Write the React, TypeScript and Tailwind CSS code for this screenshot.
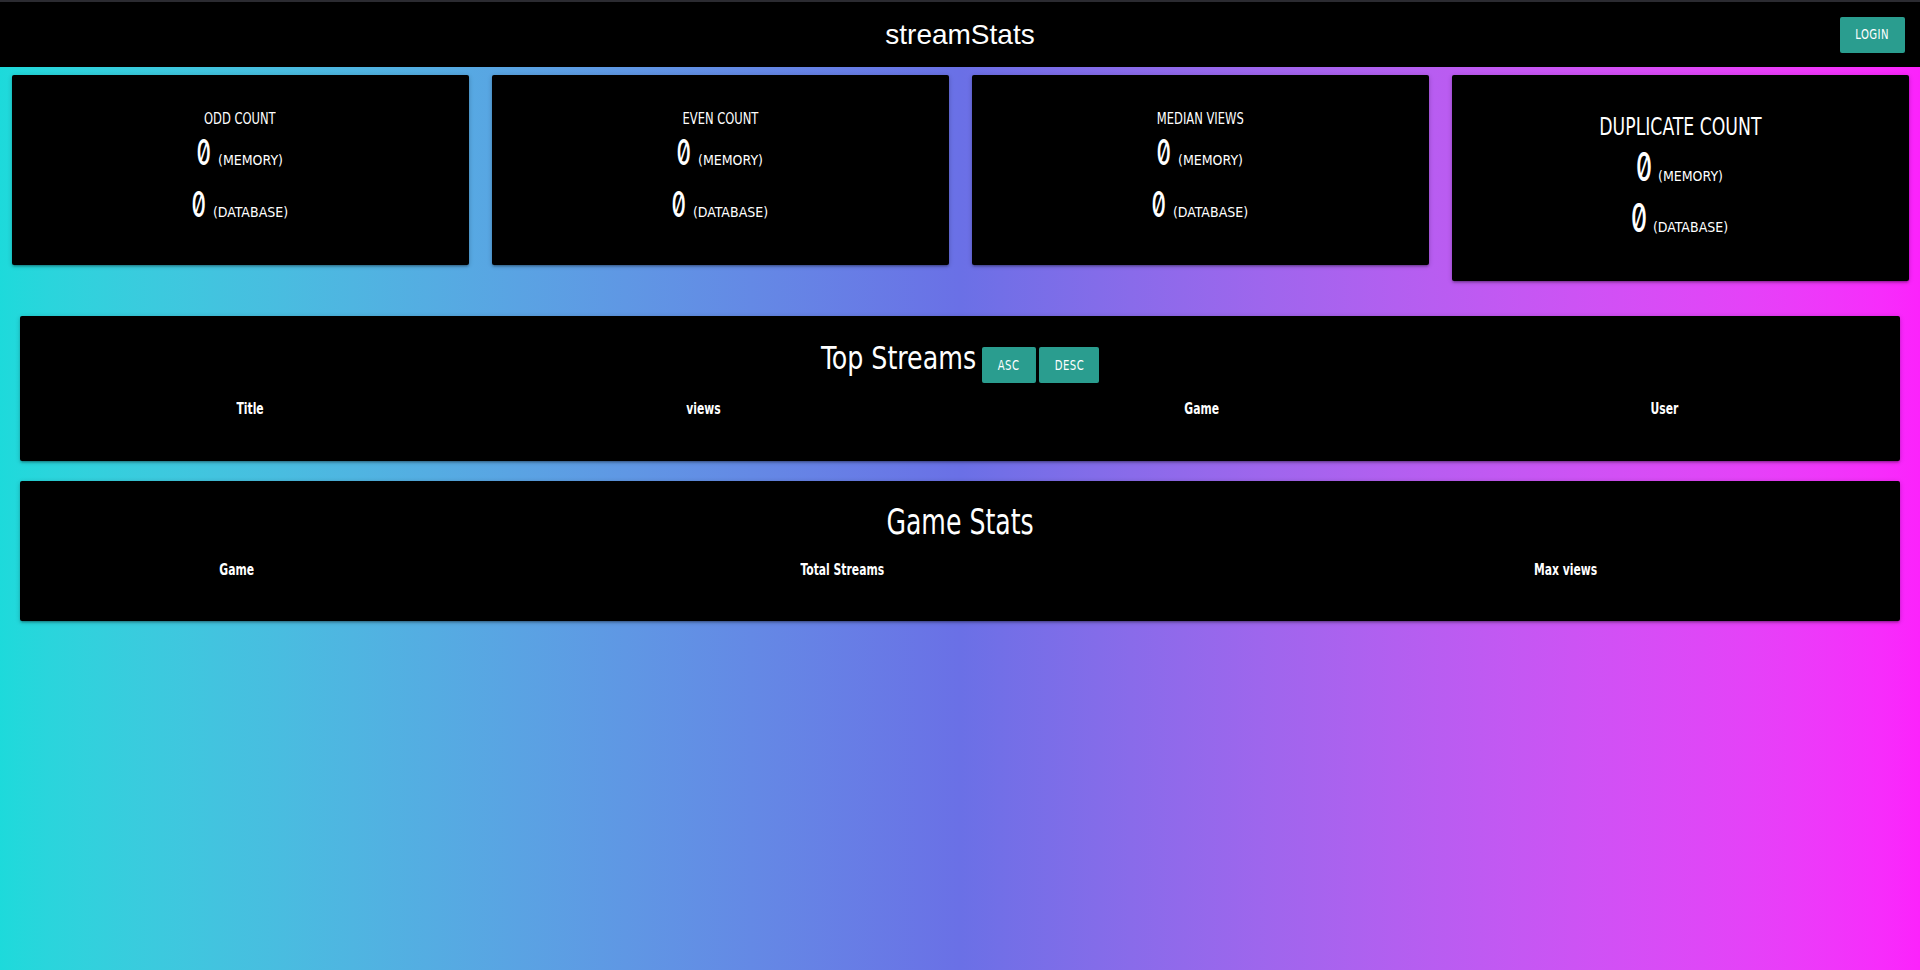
import React from 'react';

const font = "font-['DejaVu_Sans_Condensed','Liberation_Sans',sans-serif]";
const cardShadow = 'shadow-[0_2px_2px_0_rgba(0,0,0,0.14),0_3px_1px_-2px_rgba(0,0,0,0.12),0_1px_5px_0_rgba(0,0,0,0.2)]';
const btn = `bg-[#2a9d8f] text-white uppercase rounded-[2px] h-[36px] flex items-center justify-center text-[14px] tracking-[0.6px] ${cardShadow}`;

// the reference font is narrower than anything installed, so squeeze headings a bit
const Narrow: React.FC<{ children: React.ReactNode; className?: string }> = ({ children, className = 'scale-x-[0.8]' }) => (
  <span className={`inline-block whitespace-nowrap ${className}`}>{children}</span>
);

const Zero: React.FC<{ big?: boolean }> = ({ big }) => (
  <span className={`inline-flex justify-center w-[14px] font-['Inter',sans-serif] font-medium slashed-zero ${big ? 'text-[40px] leading-[50px]' : 'text-[36px] leading-[44px]'}`}>
    <span className="inline-block scale-x-[0.62]">0</span>
  </span>
);

interface StatProps {
  title: string;
  big?: boolean;
}

const StatCard: React.FC<StatProps> = ({ title, big }) => (
  <div className="px-[11.5px]">
    <div className={`bg-black rounded-[2px] text-white text-center ${cardShadow} ${big ? 'pt-[37px] pb-[38px]' : 'pt-[33px] pb-[39px]'}`}>
      <div className={big ? 'text-[24px] leading-[30px]' : 'text-[16px] leading-[22px]'}>
        <Narrow>{title}</Narrow>
      </div>
      <div className="flex items-baseline justify-center gap-[7px]">
        <Zero big={big} />
        <span className="text-[14px] leading-none">(MEMORY)</span>
      </div>
      <div className={`flex items-baseline justify-center gap-[7px] ${big ? 'mt-[1px]' : 'mt-[8px]'}`}>
        <Zero big={big} />
        <span className="text-[14px] leading-none">(DATABASE)</span>
      </div>
    </div>
  </div>
);

const Th: React.FC<{ label: string; className: string }> = ({ label, className }) => (
  <th className={`py-[15px] ${className}`}>
    <Narrow>{label}</Narrow>
  </th>
);

const App: React.FC = () => {
  return (
    <div className={`min-h-screen bg-gradient-to-r from-[#1ddadb] via-[#6a70e6] to-[#fc22fc] ${font}`}>
      <nav className="h-[67px] border-t-2 border-[#2b2b31] bg-black grid grid-cols-[1fr_auto_1fr] items-center">
        <div />
        <span className="text-white text-[28px] font-['Liberation_Sans',sans-serif]">streamStats</span>
        <div className="flex justify-end pr-[15px]">
          <button className={`${btn} w-[65px]`}>
            <Narrow>Login</Narrow>
          </button>
        </div>
      </nav>

      <div className="grid grid-cols-4 items-start mt-[8px]">
        <StatCard title="ODD COUNT" />
        <StatCard title="EVEN COUNT" />
        <StatCard title="MEDIAN VIEWS" />
        <StatCard title="DUPLICATE COUNT" big />
      </div>

      <div className={`mx-[20px] mt-[35px] bg-black rounded-[2px] text-white px-[24px] pt-[22px] pb-[26px] ${cardShadow}`}>
        <div className="flex justify-center items-start">
          <h4 className="w-[156px] text-[32px] leading-[40px]">
            <Narrow className="scale-x-[0.88] origin-left">Top Streams</Narrow>
          </h4>
          <button className={`${btn} w-[54px] mt-[9px] ml-[5px]`}>
            <Narrow>asc</Narrow>
          </button>
          <button className={`${btn} w-[60px] mt-[9px] ml-[3px]`}>
            <Narrow>desc</Narrow>
          </button>
        </div>
        <table className="table-fixed w-full mt-[1px]">
          <thead>
            <tr className="text-[15px] leading-[21px] font-bold">
              <Th label="Title" className="w-[412px]" />
              <Th label="views" className="w-[494px]" />
              <Th label="Game" className="w-[502px]" />
              <Th label="User" className="w-[423px]" />
            </tr>
          </thead>
          <tbody />
        </table>
      </div>

      <div className={`mx-[20px] mt-[20px] bg-black rounded-[2px] text-white px-[24px] pt-[19px] pb-[25px] ${cardShadow}`}>
        <h4 className="text-center text-[35px] leading-[44px]">
          <Narrow>Game Stats</Narrow>
        </h4>
        <table className="table-fixed w-full mt-[1px]">
          <thead>
            <tr className="text-[15px] leading-[21px] font-bold">
              <Th label="Game" className="w-[386px]" />
              <Th label="Total Streams" className="w-[824px]" />
              <Th label="Max views" className="w-[621px]" />
            </tr>
          </thead>
          <tbody />
        </table>
      </div>
    </div>
  );
};

export default App;
